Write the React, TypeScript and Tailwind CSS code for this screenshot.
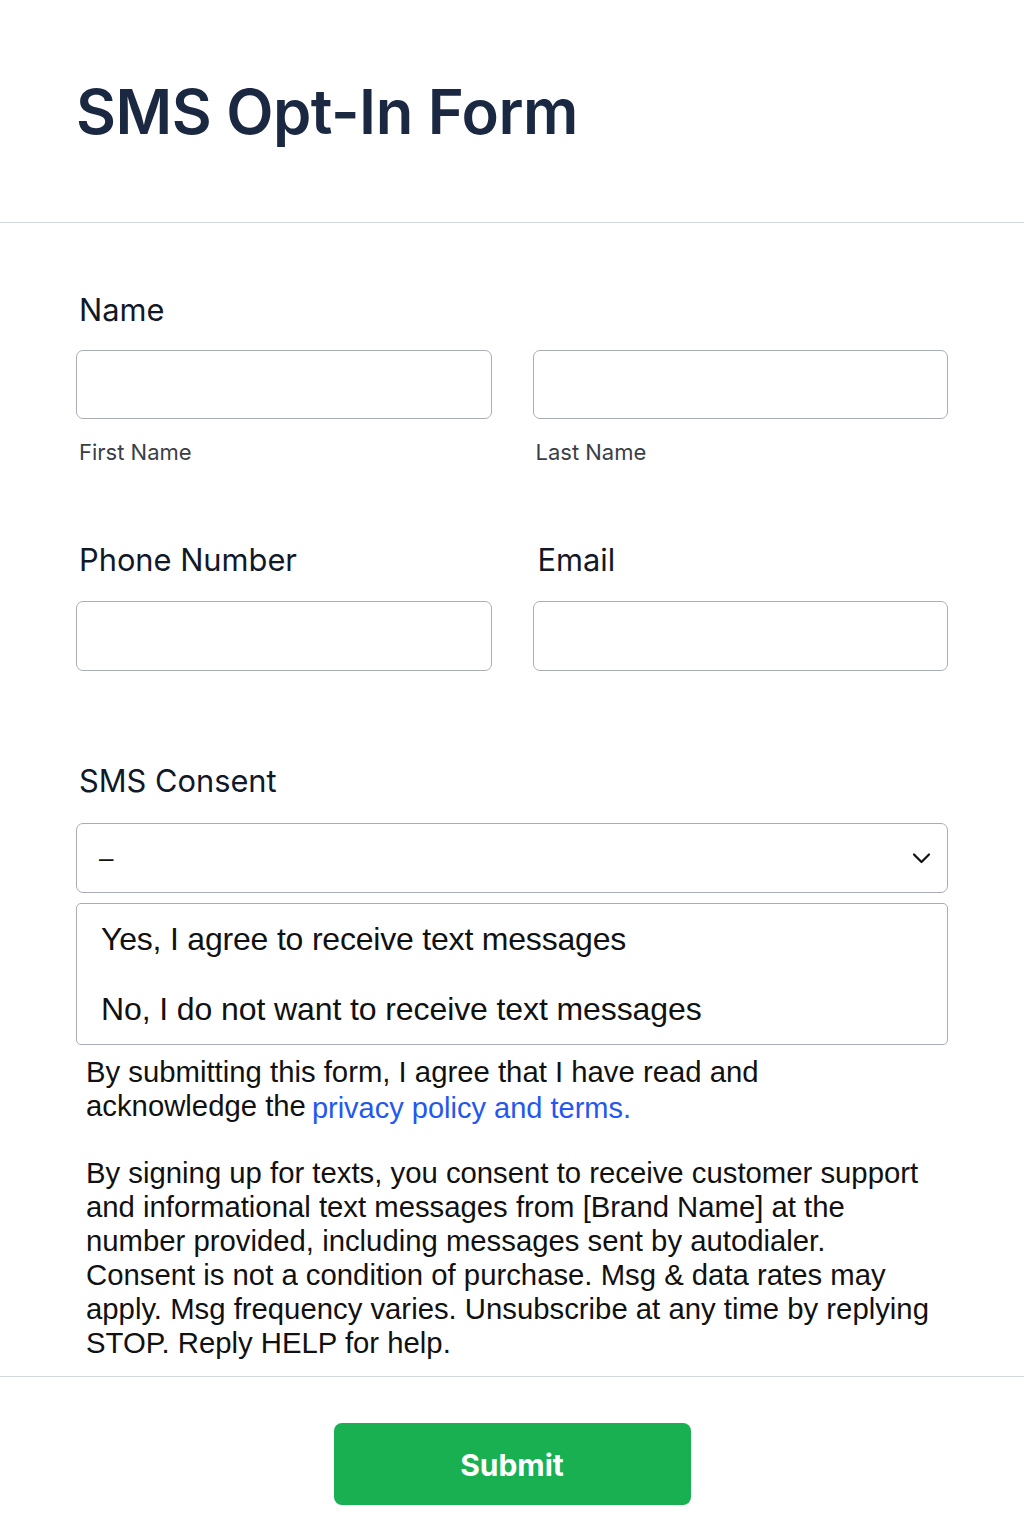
import React from "react";

function Chevron() {
  return (
    <svg width="19" height="12" viewBox="0 0 19 12" fill="none" stroke="#111" strokeWidth="2.2" strokeLinecap="round" strokeLinejoin="round">
      <path d="M2 2.5l7.5 7.5 7.5-7.5" />
    </svg>
  );
}

export default function App() {
  const inter = { fontFamily: "Inter, 'Noto Sans', sans-serif" };
  const arial = { fontFamily: "'Liberation Sans', Arial, sans-serif" };
  return (
    <div className="w-[1024px] min-h-[1536px] bg-white" style={inter}>
      <div className="h-[223px] border-b border-[#d4d7dd] pl-[76px] pt-[76px]">
        <h1 className="text-[61.5px] leading-[72px] font-semibold text-[#1b2842] tracking-[-0.5px]">SMS Opt-In Form</h1>
      </div>

      <div className="pl-[76px] pr-[76px] pt-[69px]">
        <div className="text-[30.8px] leading-[36px] text-[#111827] pl-[3px]">Name</div>
        <div className="mt-[22px] grid grid-cols-2 gap-[41px]">
          <div>
            <div className="h-[69px] rounded-[7px] border-[1.5px] border-[#a9aeb6]" />
            <div className="mt-[19px] text-[22px] leading-[28px] text-[#3a3f47] pl-[3px]">First Name</div>
          </div>
          <div>
            <div className="h-[69px] rounded-[7px] border-[1.5px] border-[#a9aeb6]" />
            <div className="mt-[19px] text-[22px] leading-[28px] text-[#3a3f47] pl-[3px]">Last Name</div>
          </div>
        </div>

        <div className="mt-[76px] grid grid-cols-2 gap-[41px]">
          <div>
            <div className="text-[30.8px] leading-[36px] text-[#111827] pl-[3px]">Phone Number</div>
            <div className="mt-[23px] h-[70px] rounded-[7px] border-[1.5px] border-[#a9aeb6]" />
          </div>
          <div>
            <div className="text-[30.8px] leading-[36px] text-[#111827] pl-[5px]">Email</div>
            <div className="mt-[23px] h-[70px] rounded-[7px] border-[1.5px] border-[#a9aeb6]" />
          </div>
        </div>

        <div className="mt-[92px] text-[30.8px] leading-[36px] text-[#111827] pl-[3px]">SMS Consent</div>
        <div className="mt-[24px] h-[70px] rounded-[7px] border-[1.5px] border-[#a9aeb6] flex items-center justify-between pl-[22px] pr-[16px]">
          <span className="text-[26px] text-[#111]" style={arial}>–</span>
          <Chevron />
        </div>
        <div className="mt-[10px] rounded-[5px] border-[1.5px] border-[#a9aeb6]" style={arial}>
          <div className="h-[70px] flex items-center pl-[24px] text-[32px] text-[#111] tracking-[-0.2px]">Yes, I agree to receive text messages</div>
          <div className="h-[70px] flex items-center pl-[24px] text-[32px] text-[#111] tracking-[-0.1px]">No, I do not want to receive text messages</div>
        </div>

        <div className="mt-[10px] pl-[10px] text-[29.3px] leading-[34px] text-[#111] whitespace-nowrap" style={arial}>
          <p>
            By submitting this form, I agree that I have read and
            <br />
            acknowledge the<a className="ml-[6px] text-[#2457ef] relative top-[2px] text-[29px]" href="#">privacy policy and terms.</a>
          </p>
          <p className="mt-[33px]">
            By signing up for texts, you consent to receive customer support
            <br />
            and informational text messages from [Brand Name] at the
            <br />
            number provided, including messages sent by autodialer.
            <br />
            Consent is not a condition of purchase. Msg &amp; data rates may
            <br />
            apply. Msg frequency varies. Unsubscribe at any time by replying
            <br />
            STOP. Reply HELP for help.
          </p>
        </div>
      </div>

      <div className="mt-[16px] border-t border-[#d4d7dd] flex justify-center pt-[46px] pb-[32px]">
        <button className="w-[357px] h-[82px] rounded-[8px] bg-[#19b052] text-white text-[30px] font-bold pt-[3px]">Submit</button>
      </div>
    </div>
  );
}
